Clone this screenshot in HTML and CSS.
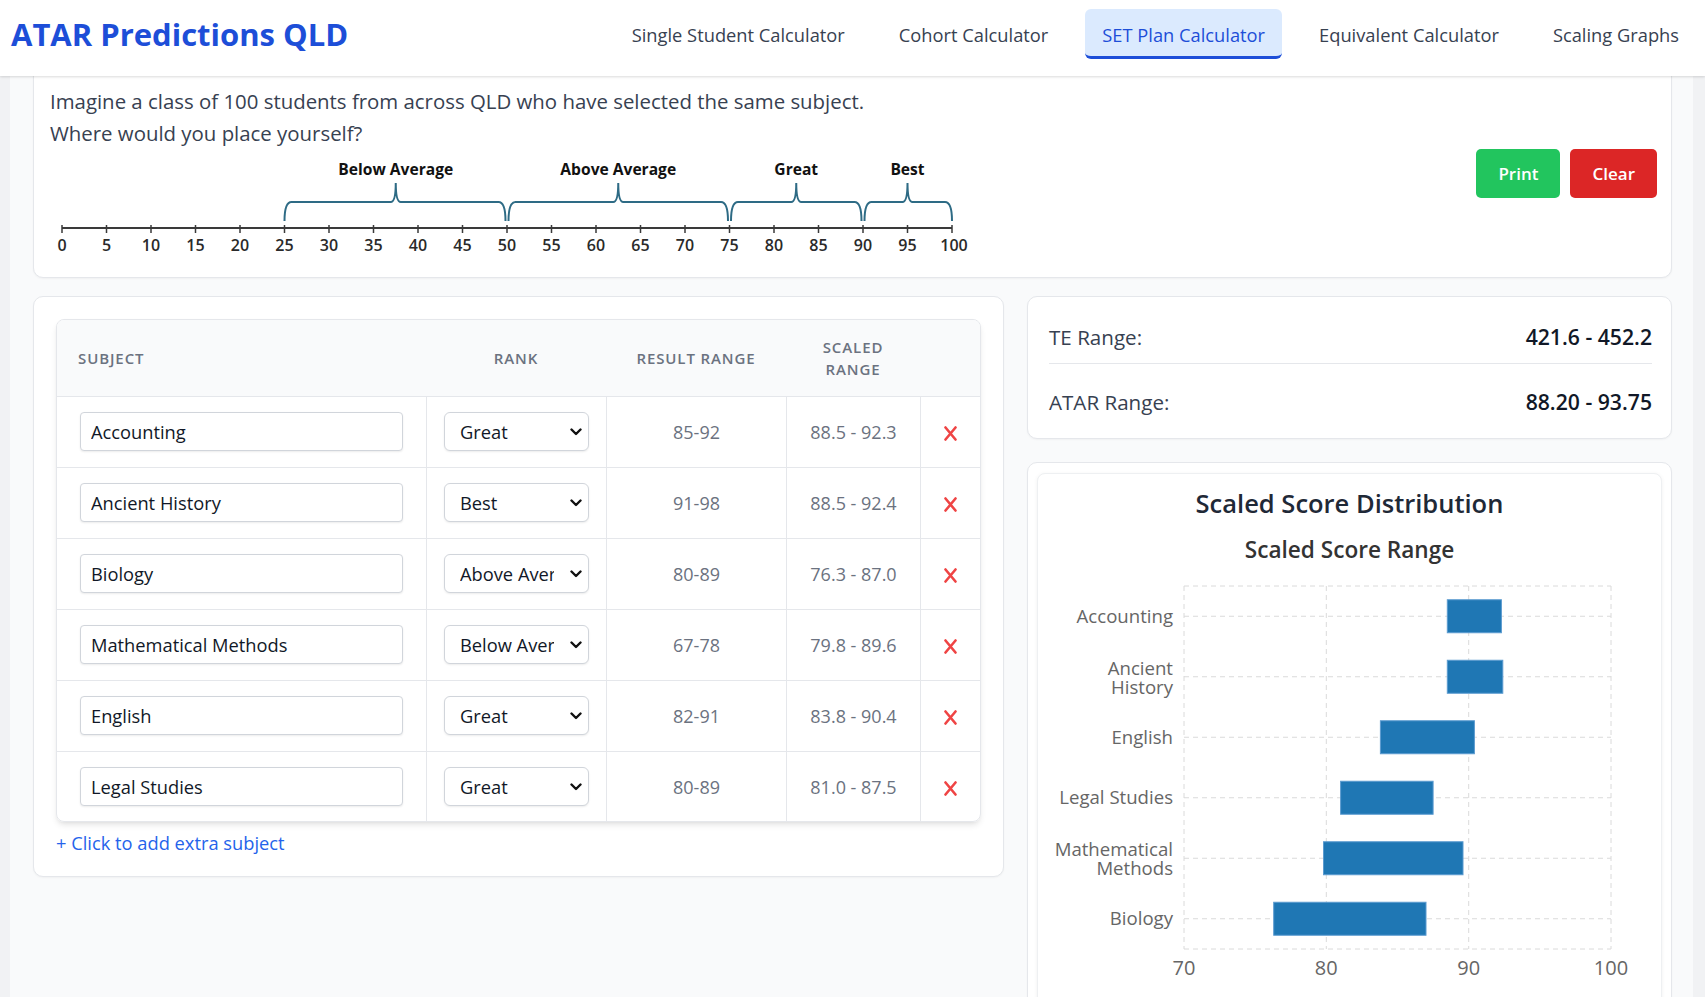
FILE: index.html
```html
<!DOCTYPE html>
<html lang="en">
<head>
<meta charset="utf-8">
<title>SET Plan Calculator - ATAR Predictions QLD</title>
<link rel="stylesheet" href="styles.css">
</head>
<body>
<header class="topbar">
  <div class="brand">ATAR Predictions QLD</div>
  <nav class="nav">
    <a class="nav-item">Single Student Calculator</a>
    <a class="nav-item">Cohort Calculator</a>
    <a class="nav-item active">SET Plan Calculator</a>
    <a class="nav-item">Equivalent Calculator</a>
    <a class="nav-item">Scaling Graphs</a>
  </nav>
</header>
<main class="page">
  <section class="card intro">
    <div class="intro-body">
      <p class="intro-text">Imagine a class of 100 students from across QLD who have selected the same subject.<br>Where would you place yourself?</p>
      <svg class="ruler" width="930" height="108" viewBox="0 0 930 108">
        <g class="braces" fill="none" stroke="#2e6b85" stroke-width="2">
          <path d="M234.5 72 Q234.5 53 241.5 53 L340.75 53 Q345.75 53 345.75 34 Q345.75 53 350.75 53 L448.5 53 Q455.5 53 455.5 72"/>
          <path d="M458.5 72 Q458.5 53 465.5 53 L563.25 53 Q568.25 53 568.25 34 Q568.25 53 573.25 53 L671 53 Q678 53 678 72"/>
          <path d="M681 72 Q681 53 688 53 L741.25 53 Q746.25 53 746.25 34 Q746.25 53 751.25 53 L804.5 53 Q811.5 53 811.5 72"/>
          <path d="M814.5 72 Q814.5 53 821.5 53 L852.5 53 Q857.5 53 857.5 34 Q857.5 53 862.5 53 L895 53 Q902 53 902 72"/>
        </g>
        <g class="brace-labels">
          <text x="345.75" y="26">Below Average</text>
          <text x="568.25" y="26">Above Average</text>
          <text x="746.25" y="26">Great</text>
          <text x="857.5" y="26">Best</text>
        </g>
        <line x1="12" y1="79" x2="902" y2="79" stroke="#3a3a3a" stroke-width="2"/>
        <g stroke="#3a3a3a" stroke-width="1.5">
          <line x1="12" y1="76" x2="12" y2="84"/><line x1="56.5" y1="76" x2="56.5" y2="84"/><line x1="101" y1="76" x2="101" y2="84"/><line x1="145.5" y1="76" x2="145.5" y2="84"/><line x1="190" y1="76" x2="190" y2="84"/><line x1="234.5" y1="76" x2="234.5" y2="84"/><line x1="279" y1="76" x2="279" y2="84"/><line x1="323.5" y1="76" x2="323.5" y2="84"/><line x1="368" y1="76" x2="368" y2="84"/><line x1="412.5" y1="76" x2="412.5" y2="84"/><line x1="457" y1="76" x2="457" y2="84"/><line x1="501.5" y1="76" x2="501.5" y2="84"/><line x1="546" y1="76" x2="546" y2="84"/><line x1="590.5" y1="76" x2="590.5" y2="84"/><line x1="635" y1="76" x2="635" y2="84"/><line x1="679.5" y1="76" x2="679.5" y2="84"/><line x1="724" y1="76" x2="724" y2="84"/><line x1="768.5" y1="76" x2="768.5" y2="84"/><line x1="813" y1="76" x2="813" y2="84"/><line x1="857.5" y1="76" x2="857.5" y2="84"/><line x1="902" y1="76" x2="902" y2="84"/>
        </g>
        <g class="tick-labels">
          <text x="12" y="102">0</text><text x="56.5" y="102">5</text><text x="101" y="102">10</text><text x="145.5" y="102">15</text><text x="190" y="102">20</text><text x="234.5" y="102">25</text><text x="279" y="102">30</text><text x="323.5" y="102">35</text><text x="368" y="102">40</text><text x="412.5" y="102">45</text><text x="457" y="102">50</text><text x="501.5" y="102">55</text><text x="546" y="102">60</text><text x="590.5" y="102">65</text><text x="635" y="102">70</text><text x="679.5" y="102">75</text><text x="724" y="102">80</text><text x="768.5" y="102">85</text><text x="813" y="102">90</text><text x="857.5" y="102">95</text><text x="904" y="102">100</text>
        </g>
      </svg>
    </div>
    <div class="actions">
      <button class="btn btn-print" type="button">Print</button>
      <button class="btn btn-clear" type="button">Clear</button>
    </div>
  </section>

  <div class="grid">
    <section class="card table-card">
      <div class="table-wrap">
        <table class="subjects">
          <colgroup>
            <col class="c-subject"><col class="c-rank"><col class="c-result"><col class="c-scaled"><col class="c-del">
          </colgroup>
          <thead>
            <tr>
              <th class="th-left">Subject</th>
              <th>Rank</th>
              <th>Result Range</th>
              <th class="th-scaled">Scaled Range</th>
              <th></th>
            </tr>
          </thead>
          <tbody>
            <tr>
              <td class="td-subject"><input class="text-input" type="text" value="Accounting"></td>
              <td class="td-rank"><div class="select-wrap"><select class="select"><option>Below Average</option><option>Above Average</option><option selected>Great</option><option>Best</option></select><svg class="chev" width="12" height="8" viewBox="0 0 12 8"><path d="M1.5 1.5 L6 6 L10.5 1.5" fill="none" stroke="#111" stroke-width="2.4" stroke-linecap="round" stroke-linejoin="round"/></svg></div></td>
              <td>85-92</td>
              <td>88.5 - 92.3</td>
              <td class="td-del"><svg class="del" width="13" height="15" viewBox="0 0 13 15"><path d="M1.5 1.5 L11.5 13.5 M11.5 1.5 L1.5 13.5" stroke="#ef4444" stroke-width="2.6" stroke-linecap="round"/></svg></td>
            </tr>
            <tr>
              <td class="td-subject"><input class="text-input" type="text" value="Ancient History"></td>
              <td class="td-rank"><div class="select-wrap"><select class="select"><option>Below Average</option><option>Above Average</option><option>Great</option><option selected>Best</option></select><svg class="chev" width="12" height="8" viewBox="0 0 12 8"><path d="M1.5 1.5 L6 6 L10.5 1.5" fill="none" stroke="#111" stroke-width="2.4" stroke-linecap="round" stroke-linejoin="round"/></svg></div></td>
              <td>91-98</td>
              <td>88.5 - 92.4</td>
              <td class="td-del"><svg class="del" width="13" height="15" viewBox="0 0 13 15"><path d="M1.5 1.5 L11.5 13.5 M11.5 1.5 L1.5 13.5" stroke="#ef4444" stroke-width="2.6" stroke-linecap="round"/></svg></td>
            </tr>
            <tr>
              <td class="td-subject"><input class="text-input" type="text" value="Biology"></td>
              <td class="td-rank"><div class="select-wrap"><select class="select"><option>Below Average</option><option selected>Above Average</option><option>Great</option><option>Best</option></select><svg class="chev" width="12" height="8" viewBox="0 0 12 8"><path d="M1.5 1.5 L6 6 L10.5 1.5" fill="none" stroke="#111" stroke-width="2.4" stroke-linecap="round" stroke-linejoin="round"/></svg></div></td>
              <td>80-89</td>
              <td>76.3 - 87.0</td>
              <td class="td-del"><svg class="del" width="13" height="15" viewBox="0 0 13 15"><path d="M1.5 1.5 L11.5 13.5 M11.5 1.5 L1.5 13.5" stroke="#ef4444" stroke-width="2.6" stroke-linecap="round"/></svg></td>
            </tr>
            <tr>
              <td class="td-subject"><input class="text-input" type="text" value="Mathematical Methods"></td>
              <td class="td-rank"><div class="select-wrap"><select class="select"><option selected>Below Average</option><option>Above Average</option><option>Great</option><option>Best</option></select><svg class="chev" width="12" height="8" viewBox="0 0 12 8"><path d="M1.5 1.5 L6 6 L10.5 1.5" fill="none" stroke="#111" stroke-width="2.4" stroke-linecap="round" stroke-linejoin="round"/></svg></div></td>
              <td>67-78</td>
              <td>79.8 - 89.6</td>
              <td class="td-del"><svg class="del" width="13" height="15" viewBox="0 0 13 15"><path d="M1.5 1.5 L11.5 13.5 M11.5 1.5 L1.5 13.5" stroke="#ef4444" stroke-width="2.6" stroke-linecap="round"/></svg></td>
            </tr>
            <tr>
              <td class="td-subject"><input class="text-input" type="text" value="English"></td>
              <td class="td-rank"><div class="select-wrap"><select class="select"><option>Below Average</option><option>Above Average</option><option selected>Great</option><option>Best</option></select><svg class="chev" width="12" height="8" viewBox="0 0 12 8"><path d="M1.5 1.5 L6 6 L10.5 1.5" fill="none" stroke="#111" stroke-width="2.4" stroke-linecap="round" stroke-linejoin="round"/></svg></div></td>
              <td>82-91</td>
              <td>83.8 - 90.4</td>
              <td class="td-del"><svg class="del" width="13" height="15" viewBox="0 0 13 15"><path d="M1.5 1.5 L11.5 13.5 M11.5 1.5 L1.5 13.5" stroke="#ef4444" stroke-width="2.6" stroke-linecap="round"/></svg></td>
            </tr>
            <tr>
              <td class="td-subject"><input class="text-input" type="text" value="Legal Studies"></td>
              <td class="td-rank"><div class="select-wrap"><select class="select"><option>Below Average</option><option>Above Average</option><option selected>Great</option><option>Best</option></select><svg class="chev" width="12" height="8" viewBox="0 0 12 8"><path d="M1.5 1.5 L6 6 L10.5 1.5" fill="none" stroke="#111" stroke-width="2.4" stroke-linecap="round" stroke-linejoin="round"/></svg></div></td>
              <td>80-89</td>
              <td>81.0 - 87.5</td>
              <td class="td-del"><svg class="del" width="13" height="15" viewBox="0 0 13 15"><path d="M1.5 1.5 L11.5 13.5 M11.5 1.5 L1.5 13.5" stroke="#ef4444" stroke-width="2.6" stroke-linecap="round"/></svg></td>
            </tr>
          </tbody>
        </table>
      </div>
      <a class="add-link">+ Click to add extra subject</a>
    </section>

    <div class="side">
      <section class="card summary">
        <div class="stat"><span class="stat-label">TE Range:</span><span class="stat-value">421.6 - 452.2</span></div>
        <div class="stat"><span class="stat-label">ATAR Range:</span><span class="stat-value">88.20 - 93.75</span></div>
      </section>

      <section class="card chart-card">
        <div class="chart-panel">
          <h2 class="chart-title">Scaled Score Distribution</h2>
          <h3 class="chart-subtitle">Scaled Score Range</h3>
          <svg class="chart" width="623" height="432" viewBox="0 0 623 432">
            <g fill="none" stroke="#dadada" stroke-width="1" stroke-dasharray="5 4">
              <line x1="146" y1="21" x2="573" y2="21"/>
              <line x1="146" y1="51.25" x2="573" y2="51.25"/>
              <line x1="146" y1="111.75" x2="573" y2="111.75"/>
              <line x1="146" y1="172.25" x2="573" y2="172.25"/>
              <line x1="146" y1="232.75" x2="573" y2="232.75"/>
              <line x1="146" y1="293.25" x2="573" y2="293.25"/>
              <line x1="146" y1="353.75" x2="573" y2="353.75"/>
              <line x1="146" y1="384" x2="573" y2="384"/>
              <line x1="146" y1="21" x2="146" y2="384"/>
              <line x1="288.3" y1="21" x2="288.3" y2="384"/>
              <line x1="430.7" y1="21" x2="430.7" y2="384"/>
              <line x1="573" y1="21" x2="573" y2="384"/>
            </g>
            <g fill="#1f77b4" stroke="#5b9bd0" stroke-width="1">
              <rect x="409.3" y="34.75" width="54.1" height="33"/>
              <rect x="409.3" y="95.25" width="55.5" height="33"/>
              <rect x="342.4" y="155.75" width="94" height="33"/>
              <rect x="302.6" y="216.25" width="92.5" height="33"/>
              <rect x="285.5" y="276.75" width="139.5" height="33"/>
              <rect x="235.7" y="337.25" width="152.3" height="33"/>
            </g>
            <g class="y-labels">
              <text x="135" y="57.5">Accounting</text>
              <text x="135" y="109.5">Ancient<tspan x="135" dy="19">History</tspan></text>
              <text x="135" y="178.5">English</text>
              <text x="135" y="239">Legal Studies</text>
              <text x="135" y="291">Mathematical<tspan x="135" dy="19">Methods</tspan></text>
              <text x="135" y="360">Biology</text>
            </g>
            <g class="x-labels">
              <text x="146" y="410">70</text>
              <text x="288.3" y="410">80</text>
              <text x="430.7" y="410">90</text>
              <text x="573" y="410">100</text>
            </g>
          </svg>
        </div>
      </section>
    </div>
  </div>
</main>
</body>
</html>
```

FILE: styles.css
```css
* { box-sizing: border-box; }

html, body {
  margin: 0;
  padding: 0;
}

body {
  font-family: "Open Sans", "Noto Sans", sans-serif;
  background: #f1f2f4;
  color: #1f2937;
  height: 997px;
  overflow: hidden;
}

/* Header */
.topbar {
  position: relative;
  z-index: 10;
  display: flex;
  justify-content: space-between;
  align-items: flex-start;
  height: 76px;
  padding: 9px 9px 0 11px;
  background: #fff;
  box-shadow: 0 1px 3px rgba(0, 0, 0, 0.1), 0 1px 2px rgba(0, 0, 0, 0.05);
}

.brand {
  font-size: 31px;
  font-weight: 700;
  line-height: 50px;
  color: #1d4ed8;
  white-space: nowrap;
}

.nav {
  display: flex;
  gap: 20px;
}

.nav-item {
  display: block;
  padding: 13px 17px 9px;
  font-size: 18.3px;
  font-weight: 500;
  line-height: 25px;
  color: #374151;
  text-decoration: none;
  border-bottom: 3px solid transparent;
  border-radius: 6px;
  white-space: nowrap;
}

.nav-item.active {
  background: #dbeafe;
  color: #1d4ed8;
  border-bottom-color: #1d4ed8;
}

/* Page */
.page {
  margin: 0 12px 0 10px;
  padding: 0 21px 40px 23px;
  background: #f9fafb;
  min-height: 921px;
}

.card {
  background: #fff;
  border: 1px solid #e5e7eb;
  border-radius: 10px;
  box-shadow: 0 1px 2px rgba(0, 0, 0, 0.04);
}

/* Intro */
.intro {
  margin-top: -12px;
  padding: 20px 14px 20px 16px;
  display: flex;
  justify-content: space-between;
  align-items: center;
}

.intro-text {
  margin: 0;
  font-size: 20.4px;
  line-height: 32px;
  color: #374151;
}

.ruler {
  display: block;
}

.brace-labels text {
  font-family: "Open Sans", "Liberation Sans", sans-serif;
  font-size: 15.6px;
  font-weight: 700;
  fill: #111;
  text-anchor: middle;
}

.tick-labels text {
  font-family: "Open Sans", "Liberation Sans", sans-serif;
  font-size: 16px;
  font-weight: 600;
  fill: #2a2a2a;
  text-anchor: middle;
}

.actions {
  display: flex;
  gap: 10px;
  margin-top: 4px;
}

.btn {
  border: 0;
  border-radius: 5px;
  padding: 12px 22px;
  font-family: inherit;
  font-size: 17px;
  font-weight: 600;
  line-height: 25px;
  color: #fff;
}

.btn-print { background: #22c55e; }
.btn-clear { background: #dc2626; }

/* Grid */
.grid {
  margin-top: 18px;
  display: grid;
  grid-template-columns: minmax(0, 971fr) minmax(0, 645fr);
  gap: 23px;
  align-items: start;
}

.table-card {
  padding: 22px 22px 20px;
}

.table-wrap {
  border: 1px solid #e5e7eb;
  border-radius: 8px;
  overflow: hidden;
  box-shadow: 0 4px 6px -1px rgba(0, 0, 0, 0.1), 0 2px 4px -2px rgba(0, 0, 0, 0.06);
}

.subjects {
  width: 100%;
  table-layout: fixed;
  border-collapse: separate;
  border-spacing: 0;
}

.c-subject { width: 369px; }
.c-rank { width: 180px; }
.c-result { width: 180px; }
.c-scaled { width: 134px; }
.c-del { width: 60px; }

.subjects thead th {
  height: 77px;
  padding: 0 12px;
  background: #f9fafb;
  border-bottom: 1px solid #e5e7eb;
  font-size: 15px;
  font-weight: 600;
  line-height: 22px;
  letter-spacing: 0.06em;
  text-transform: uppercase;
  color: #6b7280;
  text-align: center;
  vertical-align: middle;
}

.subjects thead th.th-left {
  text-align: left;
  padding-left: 21px;
}

.subjects tbody td {
  padding: 15px 0 16px;
  border-bottom: 1px solid #e5e7eb;
  border-left: 1px solid #e5e7eb;
  font-size: 18px;
  color: #6b7280;
  text-align: center;
  vertical-align: middle;
}

.subjects tbody tr:last-child td {
  border-bottom: 0;
  padding-bottom: 15px;
}

.subjects tbody td.td-subject {
  border-left: 0;
  padding-left: 23px;
  padding-right: 23px;
}

.subjects tbody td.td-rank {
  padding-left: 17px;
  padding-right: 17px;
}

.text-input {
  display: block;
  width: 100%;
  height: 39px;
  padding: 0 10px;
  border: 1px solid #d1d5db;
  border-radius: 4px;
  background: #fff;
  font-family: inherit;
  font-size: 18.3px;
  color: #111827;
  box-shadow: 0 1px 2px rgba(0, 0, 0, 0.08);
}

.select-wrap {
  position: relative;
  width: 145px;
}

.select {
  -webkit-appearance: none;
  appearance: none;
  display: block;
  width: 145px;
  height: 39px;
  padding: 0 34px 0 15px;
  border: 1px solid #d1d5db;
  border-radius: 6px;
  background: #fff;
  font-family: inherit;
  font-size: 18.3px;
  color: #111827;
  box-shadow: 0 1px 2px rgba(0, 0, 0, 0.08);
}

.chev {
  position: absolute;
  right: 7px;
  top: 16px;
  pointer-events: none;
}

.del {
  display: inline-block;
  vertical-align: middle;
}

.add-link {
  display: inline-block;
  margin-top: 7px;
  font-size: 18.3px;
  line-height: 27px;
  color: #2563eb;
  text-decoration: none;
}

/* Side */
.side {
  display: flex;
  flex-direction: column;
  gap: 23px;
}

.summary {
  padding: 14px 19px 10px 21px;
}

.stat {
  display: flex;
  justify-content: space-between;
  align-items: baseline;
  padding: 12px 0;
  font-size: 20.6px;
  line-height: 28px;
}

.stat:first-child {
  border-bottom: 1px solid #e5e7eb;
}

.stat + .stat {
  margin-top: 12px;
}

.stat-label { color: #374151; }
.stat-value { color: #111827; font-weight: 600; font-size: 21.2px; }

.chart-card {
  padding: 10px 9px;
}

.chart-panel {
  border: 1px solid #eef0f2;
  border-radius: 8px;
  box-shadow: 0 1px 4px rgba(0, 0, 0, 0.06);
  padding: 13px 0 10px;
  background: #fff;
}

.chart-title {
  margin: 0;
  font-size: 25.5px;
  font-weight: 600;
  line-height: 32px;
  color: #1f2937;
  text-align: center;
}

.chart-subtitle {
  margin: 16px 0 0;
  font-size: 22.6px;
  font-weight: 600;
  line-height: 30px;
  color: #333;
  text-align: center;
}

.chart {
  display: block;
}

.y-labels text {
  font-family: "Open Sans", sans-serif;
  font-size: 18.6px;
  fill: #666;
  text-anchor: end;
}

.x-labels text {
  font-family: "Open Sans", sans-serif;
  font-size: 20px;
  fill: #666;
  text-anchor: middle;
}
```
